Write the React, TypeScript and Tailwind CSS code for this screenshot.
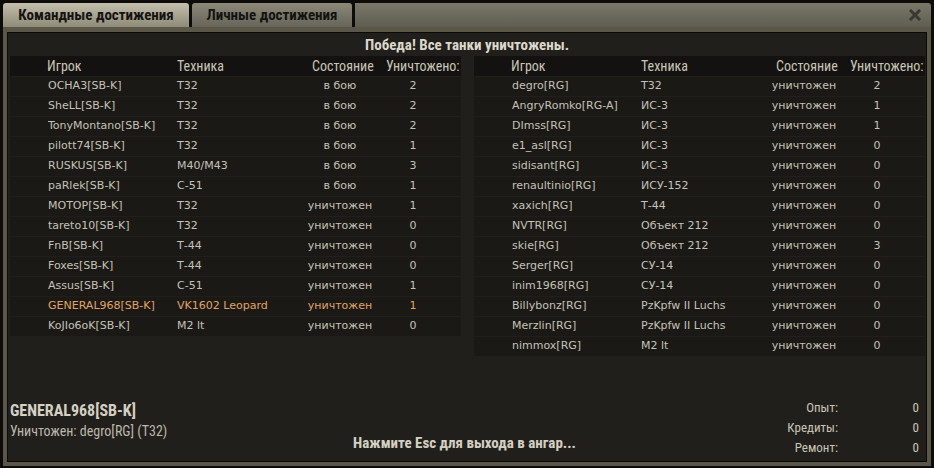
import React from 'react';

type Row = { name: string; tank: string; state: string; kills: number; me?: boolean };

const allies: Row[] = [
  { name: 'OCHA3[SB-K]', tank: 'T32', state: 'в бою', kills: 2 },
  { name: 'SheLL[SB-K]', tank: 'T32', state: 'в бою', kills: 2 },
  { name: 'TonyMontano[SB-K]', tank: 'T32', state: 'в бою', kills: 2 },
  { name: 'pilott74[SB-K]', tank: 'T32', state: 'в бою', kills: 1 },
  { name: 'RUSKUS[SB-K]', tank: 'M40/M43', state: 'в бою', kills: 3 },
  { name: 'paRlek[SB-K]', tank: 'С-51', state: 'в бою', kills: 1 },
  { name: 'MOTOP[SB-K]', tank: 'T32', state: 'уничтожен', kills: 1 },
  { name: 'tareto10[SB-K]', tank: 'T32', state: 'уничтожен', kills: 0 },
  { name: 'FnB[SB-K]', tank: 'Т-44', state: 'уничтожен', kills: 0 },
  { name: 'Foxes[SB-K]', tank: 'Т-44', state: 'уничтожен', kills: 0 },
  { name: 'Assus[SB-K]', tank: 'С-51', state: 'уничтожен', kills: 1 },
  { name: 'GENERAL968[SB-K]', tank: 'VK1602 Leopard', state: 'уничтожен', kills: 1, me: true },
  { name: 'KoJIo6oK[SB-K]', tank: 'M2 lt', state: 'уничтожен', kills: 0 },
];

const enemies: Row[] = [
  { name: 'degro[RG]', tank: 'T32', state: 'уничтожен', kills: 2 },
  { name: 'AngryRomko[RG-A]', tank: 'ИС-3', state: 'уничтожен', kills: 1 },
  { name: 'DImss[RG]', tank: 'ИС-3', state: 'уничтожен', kills: 1 },
  { name: 'e1_asl[RG]', tank: 'ИС-3', state: 'уничтожен', kills: 0 },
  { name: 'sidisant[RG]', tank: 'ИС-3', state: 'уничтожен', kills: 0 },
  { name: 'renaultinio[RG]', tank: 'ИСУ-152', state: 'уничтожен', kills: 0 },
  { name: 'xaxich[RG]', tank: 'Т-44', state: 'уничтожен', kills: 0 },
  { name: 'NVTR[RG]', tank: 'Объект 212', state: 'уничтожен', kills: 0 },
  { name: 'skie[RG]', tank: 'Объект 212', state: 'уничтожен', kills: 3 },
  { name: 'Serger[RG]', tank: 'СУ-14', state: 'уничтожен', kills: 0 },
  { name: 'inim1968[RG]', tank: 'СУ-14', state: 'уничтожен', kills: 0 },
  { name: 'Billybonz[RG]', tank: 'PzKpfw II Luchs', state: 'уничтожен', kills: 0 },
  { name: 'Merzlin[RG]', tank: 'PzKpfw II Luchs', state: 'уничтожен', kills: 0 },
  { name: 'nimmox[RG]', tank: 'M2 lt', state: 'уничтожен', kills: 0 },
];

const narrow = "font-['Liberation_Sans_Narrow','Roboto_Condensed','Liberation_Sans',sans-serif]";

function Team({ rows }: { rows: Row[] }) {
  return (
    <div className="w-[451px]">
      {/* column captions */}
      <div className={`flex h-[20px] items-center bg-[#131210] pl-[37px] text-[14px] text-[#c9c5b6] ${narrow}`}>
        <div className="w-[130px]">Игрок</div>
        <div className="w-[135px]">Техника</div>
        <div className="w-[74px]">Состояние</div>
        <div>Уничтожено:</div>
      </div>
      {rows.map(r => (
        <div
          key={r.name}
          className={`mt-px flex h-[19px] items-center bg-[#1a1916] pl-[38px] font-['DejaVu_Sans',sans-serif] text-[11px]
                      ${r.me ? 'text-[#e3a45c]' : 'text-[#c6c2b6]'}`}
        >
          <div className="w-[129px] truncate">{r.name}</div>
          <div className="w-[113px]">{r.tank}</div>
          <div className="w-[100px] text-center">{r.state}</div>
          <div className="w-[46px] text-center">{r.kills}</div>
        </div>
      ))}
    </div>
  );
}

export default function App() {
  return (
    <div className="h-[468px] w-[934px] overflow-hidden bg-[#0d0c0a] px-[3px] pt-[3px]">
      {/* tabs + title bar */}
      <div className={`flex h-[24px] gap-[3px] font-bold ${narrow}`}>
        <div className="flex w-[186px] items-center justify-center rounded-t-[3px] bg-gradient-to-b from-[#c3bfac] to-[#8f8b79] text-[15px] text-[#141310]">
          Командные достижения
        </div>
        <div className="flex w-[160px] items-center justify-center rounded-t-[3px] bg-gradient-to-b from-[#8c8978] to-[#67645a] text-[15px] text-[#141310]">
          Личные достижения
        </div>
        <div className="flex flex-1 items-center justify-end rounded-tr-[3px] bg-gradient-to-b from-[#7b786b] to-[#5f5c51] pr-[10px]">
          <svg width="12" height="12" viewBox="0 0 12 12">
            <path d="M2 2 L10 10 M10 2 L2 10" stroke="#3a382f" strokeWidth="3" strokeLinecap="square" />
          </svg>
        </div>
      </div>

      {/* window frame */}
      <div className="h-[439px] bg-[#5a5749] px-[4px] pb-[4px] pt-[5px]">
        <div className="flex h-full flex-col border border-[#0b0a09] bg-[#211f1b] px-px">
          <div className={`flex h-[23px] items-center justify-center pt-[1px] text-[15px] font-bold text-[#dcd8cb] ${narrow}`}>
            Победа! Все танки уничтожены.
          </div>

          <div className="flex gap-[13px] pl-px">
            <Team rows={allies} />
            <Team rows={enemies} />
          </div>

          {/* footer */}
          <div className={`mt-auto flex items-end justify-between pb-[3px] pl-px pr-[6px] ${narrow}`}>
            <div className="w-[300px] pb-[17px]">
              <div className="text-[16px] font-bold leading-[20px] text-[#d4d0c3]">GENERAL968[SB-K]</div>
              <div className="text-[14px] leading-[20px] text-[#bcb8ac]">Уничтожен: degro[RG] (T32)</div>
            </div>
            <div className="pb-[4px] text-[15px] font-bold text-[#d4d0c3]">Нажмите Esc для выхода в ангар...</div>
            <div className="grid w-[300px] grid-cols-[1fr_81px] text-right text-[13px] leading-[20px] text-[#c9c5b8]">
              <div>Опыт:</div>
              <div>0</div>
              <div>Кредиты:</div>
              <div>0</div>
              <div>Ремонт:</div>
              <div>0</div>
            </div>
          </div>
        </div>
      </div>
    </div>
  );
}
